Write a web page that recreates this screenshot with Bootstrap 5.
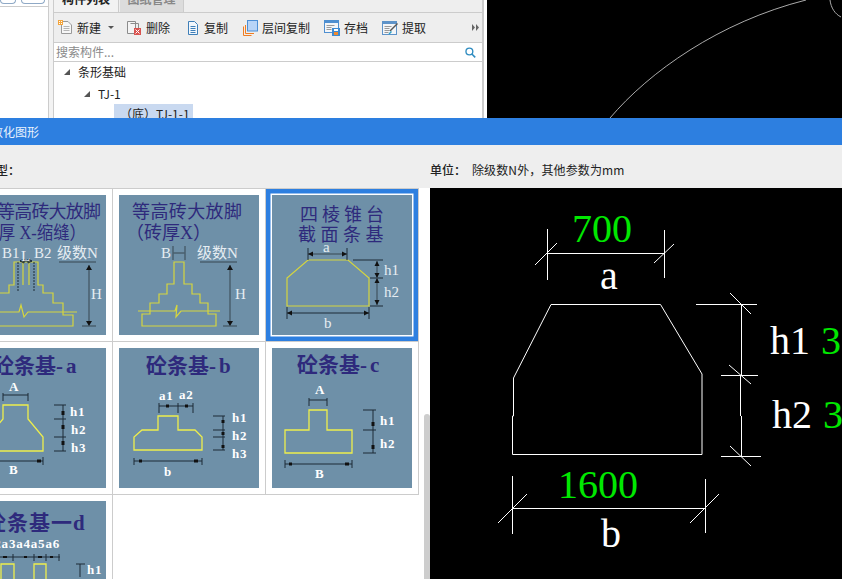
<!DOCTYPE html>
<html lang="zh">
<head>
<meta charset="utf-8">
<title>参数化图形</title>
<link href="https://cdn.jsdelivr.net/npm/bootstrap@5.3.0/dist/css/bootstrap.min.css" rel="stylesheet">
<style>
html,body{margin:0;height:579px;overflow:hidden;background:#fff}
body{font-family:"Noto Sans CJK SC","Liberation Sans",sans-serif;font-size:12px;color:#222}
.stage{width:842px;height:579px;overflow:hidden}
.top-zone{height:118px;flex:none;overflow:hidden}
.side-col{width:49px;flex:none;border-right:1px solid #ccc}
.side-head{height:7px;border-bottom:1px solid #ccc;padding-left:0;overflow:hidden}
.mini-btn{height:4px;border:1px solid #8fa9c6;border-top:0;border-radius:0 0 4px 4px;background:#fff}
.mini-a{width:16px}.mini-b{width:24px;margin-left:5px}
.side-gap{width:4px;flex:none;background:#f3f3f3}
.panel{width:431px;flex:none;border-left:1px solid #ccc;border-right:2px solid #ccc}
.tab-strip{height:13px;flex:none;border-bottom:1px solid #ccc;background:#eee;overflow:hidden}
.tab-on,.tab-off{height:12px;overflow:hidden;text-align:center}
.tab-on{width:65px;background:#f2f2f2;font-weight:700;border-right:1px solid #ccc}
.tab-off{width:64px;margin-left:1px;background:#dcdcdc;color:#888;font-weight:700;border-right:1px solid #ccc}
.tab-on span,.tab-off span{display:block;margin-top:-10px;line-height:18px;font-size:12px}
.tool-bar{height:30px;flex:none;background:#eee;border-bottom:1px solid #ccc;padding-left:4px;padding-right:3px}
.tool-item{gap:4px;line-height:14px;white-space:nowrap}
.tool-item svg{flex:none}
.tool-del{margin-left:12px}
.tool-copy{margin-left:16px}
.tool-layer{margin-left:15px}
.tool-save,.tool-take{margin-left:14px}
.caret-mark{width:0;height:0;border:3px solid transparent;border-top:3px solid #555;border-bottom:0;margin-left:3px}
.search-row{height:19px;flex:none;border-bottom:1px solid #ccc;padding:0 6px 0 2px;background:#fff}
.search-input{border:0;padding:0;height:18px;font-size:12px;border-radius:0;background:transparent;box-shadow:none;line-height:18px;font-family:inherit}
.search-input::placeholder{color:#8a8a8a;opacity:1}
.tree-zone{flex:1;min-height:0;overflow:hidden;line-height:14px}
.tree-a,.tree-b{height:21px}
.tree-a{padding:0 0 1px 10px;gap:8px}
.tree-b{padding:0 0 0 30px;gap:8px}
.tree-tri{width:0;height:0;border-left:6px solid transparent;border-bottom:6px solid #555;flex:none}
.tree-c{margin-left:60px;width:79px;height:14px;background:#c9d9f0;padding-left:6px;line-height:20px;white-space:nowrap;overflow:hidden}
.cad-top{flex:1;background:#000;min-width:0;margin-left:3px}
.cad-top svg,.cad-main svg{display:block}
.title-bar{height:27px;flex:none;background:#2d7fe0;color:#e8f1fc;font-size:12px;line-height:27px;overflow:hidden;white-space:nowrap}
.title-bar span{margin-left:-9px}
.unit-bar{height:43px;flex:none;background:#eee;line-height:14px;white-space:nowrap;overflow:hidden;padding-top:7px}
.unit-left{width:430px;flex:none;font-weight:500}
.unit-left span{margin-left:-4px;display:inline-block}
.unit-head{width:42px;flex:none;font-weight:500}
.unit-note{letter-spacing:.12px}
.dialog-body{flex:1;min-height:0;overflow:hidden}
.pick-zone{width:430px;flex:none;overflow:hidden;background:#fff}
.pick-grid{display:grid;grid-template-columns:repeat(3,153px);grid-auto-rows:153px;width:459px;margin-left:-40px;border-top:1px solid #ccc;margin-top:0}
.pick-cell{padding:6px;border-right:1px solid #ccc;border-bottom:1px solid #ccc;background:#fff}
.pick-sel{box-shadow:inset 0 0 0 4.5px #2d7fe0}
.thumb{display:block;width:140px;height:140px;background:#6e90a8}
.scroll-pos{width:6px;height:165px;background:#cdcdcd;border-radius:3px 3px 0 0}
.cad-main{flex:1;background:#000;overflow:hidden}
.t-ser{font-family:"Liberation Serif","Noto Sans CJK SC",serif}
.t-navy{fill:#2e2a7c;font-size:18px}
.t-bold{fill:#2e2a7c;font-size:21px;font-weight:700}
.t-soft{fill:#e6edf2;font-size:15px}
.t-lab{fill:#fff;font-size:13px;font-weight:700;letter-spacing:.8px}
.y-line{fill:none;stroke:#d6d63e;stroke-width:1.2}
.y-bold{fill:none;stroke:#eeee4c;stroke-width:1.3}
.k-line{fill:none;stroke:#1d2a36;stroke-width:1}
.g-line{fill:none;stroke:#4a5f6e;stroke-width:1.5}
.c-line{fill:none;stroke:#fff;stroke-width:1}
.c-txt{font-family:"Liberation Serif",serif;font-size:40px}
.c-g{fill:#00e800}.c-w{fill:#fff}
.arc-line{fill:none;stroke:#aaa;stroke-width:1}
</style>
</head>
<body>
<div class="stage d-flex flex-column">
  <div class="top-zone d-flex">
    <div class="side-col">
      <div class="side-head d-flex"><div class="mini-btn mini-a"></div><div class="mini-btn mini-b"></div></div>
    </div>
    <div class="side-gap"></div>
    <div class="panel d-flex flex-column">
      <div class="tab-strip d-flex">
        <div class="tab-on"><span>构件列表</span></div>
        <div class="tab-off"><span>图纸管理</span></div>
      </div>
      <div class="tool-bar d-flex align-items-center">
        <div class="tool-item d-flex align-items-center">
          <svg width="15" height="15" viewBox="0 0 15 15"><path d="M3.500 1.500H10L13.500 5V13.500H3.500Z" fill="#f7f7f7" stroke="#9a9a9a"/><path d="M5.500 6.500h6M5.500 8.500h6M5.500 10.500h6" stroke="#b5b5b5"/><rect x="0" y="0" width="5" height="5" fill="#f4a53c"/><path d="M1 1h1v1H1zM3 3h1v1H3zM3 1h1v1H3zM1 3h1v1H1z" fill="#fff"/></svg>
          <span>新建</span><i class="caret-mark"></i>
        </div>
        <div class="tool-item d-flex align-items-center tool-del">
          <svg width="16" height="15" viewBox="0 0 16 15"><path d="M1.500 1.500H9.500V13.500H1.500Z" fill="#f4f4f4" stroke="#8c8c8c"/><path d="M4.500 3.500H12.500V8" fill="none" stroke="#8c8c8c"/><rect x="8" y="8" width="7" height="7" fill="#d9534f"/><path d="M9.500 9.500l4 4M13.500 9.500l-4 4" stroke="#fff"/></svg>
          <span>删除</span>
        </div>
        <div class="tool-item d-flex align-items-center tool-copy">
          <svg width="14" height="14" viewBox="0 0 14 14"><path d="M2.500 .5H8.500L11.500 3.500V13.500H2.500Z" fill="#f2f7fc" stroke="#3f7fb8"/><path d="M4.500 5.500h5M4.500 7.500h5M4.500 9.500h5M4.500 11.500h5" stroke="#3f7fb8"/></svg>
          <span>复制</span>
        </div>
        <div class="tool-item d-flex align-items-center tool-layer">
          <svg width="15" height="16" viewBox="0 0 15 16"><path d="M.5 15.500V6.500M.5 15.500H8.500" stroke="#f07d22" fill="none"/><path d="M2.500 13.500V5M2.500 13.500H11" stroke="#f07d22" fill="none"/><rect x="4.500" y=".5" width="10" height="10.500" fill="#b8d4f7" stroke="#4d8fd6"/></svg>
          <span>层间复制</span>
        </div>
        <div class="tool-item d-flex align-items-center tool-save">
          <svg width="16" height="16" viewBox="0 0 16 16"><rect x=".5" y=".5" width="14" height="12" fill="#f3f5f8" stroke="#4f8fd0"/><rect x="0" y="0" width="15" height="3" fill="#4f8fd0"/><path d="M2.500 5.500h8M2.500 7.500h5M2.500 9.500h5" stroke="#9a9a9a"/><rect x="8" y="8" width="8" height="8" fill="#3d8ad2"/><rect x="10" y="12" width="4" height="3" fill="#f08a30"/><rect x="10" y="9" width="4" height="2" fill="#fff"/></svg>
          <span>存档</span>
        </div>
        <div class="tool-item d-flex align-items-center tool-take">
          <svg width="16" height="15" viewBox="0 0 16 15"><rect x=".5" y="1.500" width="14" height="13" fill="#f3f5f8" stroke="#5d93c9"/><rect x="0" y="1" width="15" height="3" fill="#5d93c9"/><path d="M2.500 6.500h7M2.500 8.500h5M2.500 10.500h5M2.500 12.500h4" stroke="#999"/><path d="M15.500 3.500L8 11" stroke="#555" stroke-width="1.500"/><path d="M9.500 11.500L7 14" stroke="#2fa3c9" stroke-width="1.500"/></svg>
          <span>提取</span>
        </div>
        <svg class="ms-auto" width="7" height="7" viewBox="0 0 7 7"><path d="M0 0L3 3.500L0 7ZM4 0L7 3.500L4 7Z" fill="#666"/></svg>
      </div>
      <div class="search-row d-flex align-items-center">
        <input class="form-control search-input flex-grow-1" type="text" placeholder="搜索构件...">
        <svg width="11" height="11" viewBox="0 0 11 11"><circle cx="4.500" cy="4.500" r="3.500" fill="none" stroke="#2f8cc0" stroke-width="1.400"/><path d="M7 7l3.500 3.500" stroke="#2f8cc0" stroke-width="1.600"/></svg>
      </div>
      <div class="tree-zone">
        <div class="tree-a d-flex align-items-center"><i class="tree-tri"></i><span>条形基础</span></div>
        <div class="tree-b d-flex align-items-center"><i class="tree-tri"></i><span>TJ-1</span></div>
        <div class="tree-c">（底）TJ-1-1</div>
      </div>
    </div>
    <div class="cad-top">
      <svg width="354" height="118" viewBox="488 0 354 118"><path class="arc-line" d="M611 118C650 72 720 22 807 0"/><path class="arc-line" d="M831 0C832 8 836 14 842 17"/></svg>
    </div>
  </div>

  <div class="title-bar"><span>数化图形</span></div>
  <div class="unit-bar d-flex align-items-center">
    <div class="unit-left"><span>型：</span></div>
    <div class="unit-head">单位：</div>
    <div class="unit-note">除级数N外，其他参数为mm</div>
  </div>

  <div class="dialog-body d-flex">
    <div class="pick-zone position-relative">
      <div class="pick-grid">
        <div class="pick-cell">
          <svg class="thumb" viewBox="0 0 140 140">
            <text class="t-ser t-navy" x="31" y="23" textLength="104">等高砖大放脚</text>
            <text class="t-ser t-navy" x="0" y="44" textLength="120" lengthAdjust="spacingAndGlyphs">（砖厚 X-缩缝）</text>
            <path class="y-line" d="M48 67H72V90H77V98H87V108H97V120H107V131H13V120H23V108H33V98H43V90H48ZM57 67V90M63 67V90"/>
            <path class="y-line" d="M8 117H53L55 110L58 122L62 117H111"/>
            <path class="k-line" d="M52 67V97M68 67V97" stroke-dasharray="2 1"/>
            <path class="k-line" d="M54 66H66M54 66l4-2v4zM66 66l-4-2v4z"/>
            <path class="g-line" d="M93 67H130M116 131H130M123 70V128"/>
            <path d="M123 70l-3 5h6zM123 131l-3-5h6z" fill="#111"/>
            <text class="t-ser t-soft" x="36" y="63">B1</text>
            <text class="t-ser t-soft" x="55" y="66">L</text>
            <text class="t-ser t-soft" x="68" y="63">B2</text>
            <text class="t-ser t-soft" x="91" y="63">级数N</text>
            <text class="t-ser t-soft" x="125" y="104">H</text>
          </svg>
        </div>
        <div class="pick-cell">
          <svg class="thumb" viewBox="0 0 140 140">
            <text class="t-ser t-navy" x="13" y="23" textLength="110">等高砖大放脚</text>
            <text class="t-ser t-navy" x="7" y="44">（砖厚X）</text>
            <path class="y-line" d="M55 67H65V89H73V99H81V108H89V119H97V131H23V119H31V108H40V99H48V89H55Z"/>
            <path class="y-line" d="M19 116H56L58 110L57 122L62 116H101"/>
            <path class="g-line" d="M54 51V65M66 51V65M54 58H66"/>
            <path class="g-line" d="M81 67H118M104 131H118M111 70V128"/>
            <path d="M111 70l-3 5h6zM111 131l-3-5h6z" fill="#111"/>
            <text class="t-ser t-soft" x="42" y="63">B</text>
            <text class="t-ser t-soft" x="78" y="63">级数N</text>
            <text class="t-ser t-soft" x="116" y="104">H</text>
          </svg>
        </div>
        <div class="pick-cell pick-sel">
          <svg class="thumb" viewBox="0 0 140 140">
            <text class="t-ser t-navy" x="28" y="26" letter-spacing="4">四棱锥台</text>
            <text class="t-ser t-navy" x="26" y="46" letter-spacing="4.500">截面条基</text>
            <path class="y-line" d="M36 65H76L97 83V111H15V83Z"/>
            <path class="g-line" d="M36 59H75"/>
            <path class="k-line" d="M36 53V65M75 53V65M81 65H111M98 83H111M98 111H111M15 112V124M97 112V124M15 118H97"/>
            <path class="g-line" d="M105 66V110"/>
            <path d="M36 59l5-2.500v5zM75 59l-5-2.500v5zM105 66l-2.500 5h5zM105 83l-2.500-5h5zM105 83l-2.500 5h5zM105 110l-2.500-5h5zM15 118l5-2.500v5zM97 118l-5-2.500v5z" fill="#111"/>
            <text class="t-ser t-soft" x="51" y="57">a</text>
            <text class="t-ser t-soft" x="112" y="80">h1</text>
            <text class="t-ser t-soft" x="112" y="102">h2</text>
            <text class="t-ser t-soft" x="52" y="133">b</text>
          </svg>
        </div>
        <div class="pick-cell">
          <svg class="thumb" viewBox="0 0 140 140">
            <text class="t-ser t-bold" x="27" y="25">砼条基<tspan letter-spacing="3">-a</tspan></text>
            <path class="y-bold" d="M37 57H62V71L77 89V103H22V89L37 71Z"/>
            <path class="k-line" d="M37 47H62M37 45V53M62 45V53M88 57H100M88 71H100M88 89H100M88 103H100M97 57V103M22 113H77M77 109V117"/>
            <path d="M95.500 63h3v4h-3zM95.500 77h3v4h-3zM95.500 93h3v4h-3zM71 111.500h4v3h-4z" fill="#111"/>
            <text class="t-ser t-lab" x="43" y="43">A</text>
            <text class="t-ser t-lab" x="104" y="68">h1</text>
            <text class="t-ser t-lab" x="105" y="86">h2</text>
            <text class="t-ser t-lab" x="105" y="104">h3</text>
            <text class="t-ser t-lab" x="43" y="126">B</text>
          </svg>
        </div>
        <div class="pick-cell">
          <svg class="thumb" viewBox="0 0 140 140">
            <text class="t-ser t-bold" x="27" y="25">砼条基<tspan letter-spacing="3">-b</tspan></text>
            <path class="y-bold" d="M39 68H59V82H76L83 89V102H15V89L23 82H39Z"/>
            <path class="k-line" d="M40 58H74M40 55V65M59 55V65M74 55V65M94 68H106M94 82H106M94 89H106M94 102H106M104 68V102M15 113H83M15 110V117M83 110V117"/>
            <path d="M47 56.500h3v3h-3zM66 56.500h3v3h-3zM102.500 72h3v3h-3zM102.500 84h3v3h-3zM102.500 97h3v3h-3zM20 111.500h3v3h-3zM75 111.500h4v3h-4z" fill="#111"/>
            <text class="t-ser t-lab" x="40" y="52">a1</text>
            <text class="t-ser t-lab" x="60" y="51">a2</text>
            <text class="t-ser t-lab" x="113" y="74">h1</text>
            <text class="t-ser t-lab" x="113" y="92">h2</text>
            <text class="t-ser t-lab" x="113" y="110">h3</text>
            <text class="t-ser t-lab" x="45" y="128">b</text>
          </svg>
        </div>
        <div class="pick-cell">
          <svg class="thumb" viewBox="0 0 140 140">
            <text class="t-ser t-bold" x="25" y="24">砼条基<tspan letter-spacing="3">-c</tspan></text>
            <path class="y-bold" d="M37 62H55V82H80V105H13V82H37Z"/>
            <path class="k-line" d="M37 52H55M37 50V58M55 50V58M91 62H104M91 82H104M91 105H104M101 62V105M13 116H80M13 112V120M80 112V120"/>
            <path d="M99.500 74h3v4h-3zM99.500 97h3v4h-3zM17 114.500h3v3h-3zM73 114.500h4v3h-4z" fill="#111"/>
            <text class="t-ser t-lab" x="43" y="46">A</text>
            <text class="t-ser t-lab" x="108" y="77">h1</text>
            <text class="t-ser t-lab" x="108" y="100">h2</text>
            <text class="t-ser t-lab" x="43" y="130">B</text>
          </svg>
        </div>
        <div class="pick-cell">
          <svg class="thumb" viewBox="0 0 140 140">
            <text class="t-ser t-bold" x="19" y="29" letter-spacing="1">砼条基一d</text>
            <path class="y-bold" d="M35 80V63H48V80M68 80V63H80V80"/>
            <path class="k-line" d="M34 56H94M47 53V60M68 53V60M80 53V60M93 53V60M110 63H119M114 63V76"/>
            <path d="M37 55h4v2h-4zM58 55h3v2h-3zM72 55h4v2h-4zM84 55h3v2h-3z" fill="#111"/>
            <text class="t-ser t-lab" x="94" y="47" text-anchor="end" letter-spacing="1.800">a1a2a3a4a5a6</text>
            <text class="t-ser t-lab" x="121" y="73">h1</text>
          </svg>
        </div>
      </div>
      <div class="scroll-pos position-absolute bottom-0 end-0"></div>
    </div>
    <div class="cad-main">
      <svg width="412" height="391" viewBox="430 188 412 391">
        <path class="c-line" d="M547 253.500H665M547.500 229V280M664.500 230V278M535 265L557 243M654 263L674 244"/>
        <path class="c-line" d="M551 304.500H660.500L702 374V454.500H512.500V416H513.500V378Z"/>
        <path class="c-line" d="M696 304.500H757M741.500 304.500V375M721 375.500H758M740.500 375.500V416M741.500 416V456M721 456.500H761M730 293L751 314M729 365L751 384M730 446L751 466"/>
        <path class="c-line" d="M512 508.500H705M512.500 476V534M705.500 479V533M498 523L527 494M690 523L719 494"/>
        <text class="c-txt c-g" x="572" y="242">700</text>
        <text class="c-txt c-w" x="600" y="289">a</text>
        <text class="c-txt c-w" x="770" y="354">h1</text>
        <text class="c-txt c-g" x="821" y="354">3</text>
        <text class="c-txt c-w" x="772" y="428">h2</text>
        <text class="c-txt c-g" x="823" y="428">3</text>
        <text class="c-txt c-g" x="558" y="498">1600</text>
        <text class="c-txt c-w" x="601" y="547">b</text>
      </svg>
    </div>
  </div>
</div>
</body>
</html>
